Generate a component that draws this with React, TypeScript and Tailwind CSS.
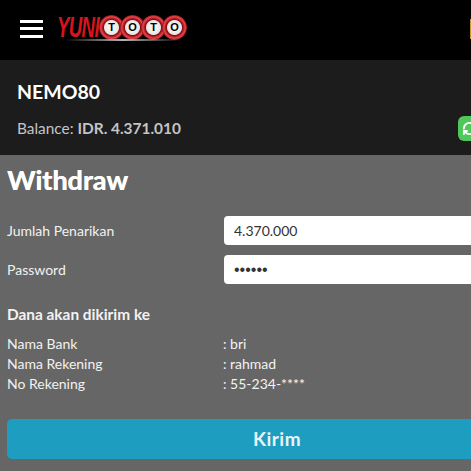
import React from 'react';
import { RefreshCw } from 'lucide-react';

const font = { fontFamily: 'Lato, "Noto Sans", sans-serif' };

const Ball = ({ letter }: { letter: string }) => (
  <div className="-ml-[4px] flex h-[25px] w-[25px] shrink-0 items-center justify-center rounded-full bg-[radial-gradient(circle_closest-side,#ffffff_0%,#e8e4e4_56%,#7d0f14_64%,#c9242b_76%,#e4484e_86%,#8c1015_100%)]">
    <span className="font-['Liberation_Sans',sans-serif] text-[11px] leading-none font-bold text-black">{letter}</span>
  </div>
);

const Logo = () => (
  <div className="relative flex items-center">
    <span className="block w-[46px] origin-left scale-x-[0.62] font-['Liberation_Sans',sans-serif] text-[30px] leading-none font-bold tracking-[-1px] whitespace-nowrap text-[#d8141c] italic">
      YUNI
    </span>
    <Ball letter="T" />
    <Ball letter="O" />
    <Ball letter="T" />
    <Ball letter="O" />
    <div className="absolute top-[27px] left-[8px] h-[2px] w-[116px] bg-gradient-to-r from-transparent via-[#b5b5b5] to-transparent" />
  </div>
);

const Field = ({ label, value, type }: { label: string; value: string; type: string }) => (
  <div className="flex items-center">
    <label className="w-[224px] shrink-0 pl-[7px] text-[14px] text-[#f2f2f2]">{label}</label>
    <input
      readOnly
      type={type}
      value={value}
      className="h-[29px] w-[300px] shrink-0 rounded-[4px] bg-white px-[10px] text-[14px] text-[#333] outline-none"
      style={type === 'password' ? { fontFamily: '"Liberation Sans", sans-serif', fontSize: 16 } : font}
    />
  </div>
);

const Info = ({ label, value }: { label: string; value: string }) => (
  <div className="flex h-[20px] items-center text-[14px] text-[#f2f2f2]">
    <span className="w-[223px] shrink-0 pl-[7px]">{label}</span>
    <span>: {value}</span>
  </div>
);

export default function App() {
  return (
    <div className="h-[471px] w-[471px] overflow-hidden bg-[#666666]" style={font}>
      <header className="flex h-[60px] items-center justify-between bg-black">
        <div className="flex items-center">
          <div className="mb-[3px] ml-[20px] flex w-[23px] flex-col gap-[4.5px]">
            <div className="h-[3px] bg-white" />
            <div className="h-[3px] bg-white" />
            <div className="h-[3px] bg-white" />
          </div>
          <div className="mb-[6px] ml-[14px]">
            <Logo />
          </div>
        </div>
        <div className="mb-[3px] h-[20px] w-[1px] bg-[#c9962f]" />
      </header>

      <section className="h-[95px] bg-[#1c1c1c] pt-[19px] pl-[17px]">
        <div className="text-[19.5px] leading-[26px] font-bold text-white">NEMO80</div>
        <div className="mt-[11px] flex items-center justify-between">
          <div className="text-[15.4px] text-[#c4c4c4]">
            Balance: <span className="font-bold">IDR. 4.371.010</span>
          </div>
          <div className="flex h-[25px] w-[13px] items-center overflow-hidden rounded-l-[6px] bg-[#4fc75a] pl-[4px] text-white">
            <RefreshCw size={15} strokeWidth={3} className="shrink-0" />
          </div>
        </div>
      </section>

      <main>
        <h1 className="pt-[6px] pl-[7px] text-[27px] leading-[37px] font-bold text-white [text-shadow:0.5px_0_0_#ffffff]">Withdraw</h1>
        <div className="mt-[18px] flex flex-col gap-[10px]">
          <Field label="Jumlah Penarikan" value="4.370.000" type="text" />
          <Field label="Password" value="123456" type="password" />
        </div>
        <div className="mt-[20px] pl-[7px] text-[15.4px] leading-[20px] font-bold text-[#f2f2f2]">Dana akan dikirim ke</div>
        <div className="mt-[9px]">
          <Info label="Nama Bank" value="bri" />
          <Info label="Nama Rekening" value="rahmad" />
          <Info label="No Rekening" value="55-234-****" />
        </div>
        <button className="mt-[26px] ml-[7px] flex h-[40px] w-[540px] items-center justify-center rounded-[5px] bg-[#1d9dc0] text-[19px] font-bold tracking-[0.5px] text-[#e8f4f8]">
          Kirim
        </button>
      </main>
    </div>
  );
}
